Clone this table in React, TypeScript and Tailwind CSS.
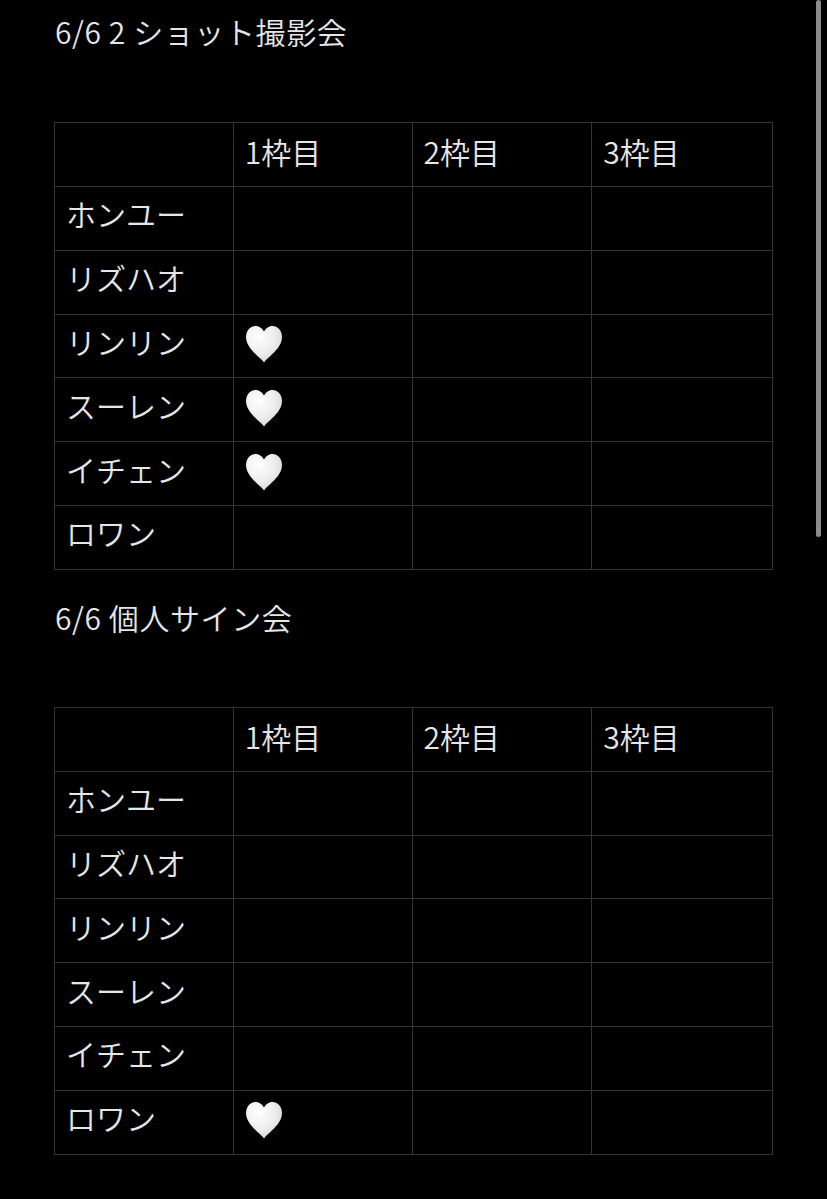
import React from "react";

const names = ["ホンユー", "リズハオ", "リンリン", "スーレン", "イチェン", "ロワン"];
const headers = ["", "1枠目", "2枠目", "3枠目"];

function Heart() {
  return (
    <svg width="38" height="38" viewBox="0 0 38 38" className="block">
      <defs>
        <radialGradient id="hg" cx="0.35" cy="0.3" r="0.8">
          <stop offset="0" stopColor="#ffffff" />
          <stop offset="0.6" stopColor="#ececec" />
          <stop offset="1" stopColor="#cfcfcf" />
        </radialGradient>
      </defs>
      <path
        d="M19 37.5 C15 32 1 23.5 1 12 C1 5.5 5.5 1 10.5 1 C14.5 1 17.5 3.5 19 6.5 C20.5 3.5 23.5 1 27.5 1 C32.5 1 37 5.5 37 12 C37 23.5 23 32 19 37.5 Z"
        fill="url(#hg)"
      />
    </svg>
  );
}

function Table({ hearts }: { hearts: number[] }) {
  const widths = ["w-[179px]", "w-[179px]", "w-[180px]", "w-[181px]"];
  return (
    <div className="w-[719px] border-l border-t border-[#333333]">
      <div className="flex">
        {headers.map((h, i) => (
          <div
            key={i}
            className={`${widths[i]} h-[64px] border-r border-b border-[#333333] flex items-center pl-[11px] pb-[6px]`}
          >
            {h}
          </div>
        ))}
      </div>
      {names.map((n, r) => (
        <div key={n} className="flex">
          <div className={`${widths[0]} h-[63.8px] border-r border-b border-[#333333] flex items-center pl-[11px] pb-[9px]`}>
            {n}
          </div>
          <div className={`${widths[1]} h-[63.8px] border-r border-b border-[#333333] flex items-center pl-[11px] pb-[4px]`}>
            {hearts.includes(r) ? <Heart /> : null}
          </div>
          <div className={`${widths[2]} h-[63.8px] border-r border-b border-[#333333]`} />
          <div className={`${widths[3]} h-[63.8px] border-r border-b border-[#333333]`} />
        </div>
      ))}
    </div>
  );
}

export default function App() {
  return (
    <div
      className="relative w-[827px] h-[1199px] bg-black text-[#e6e6e6] text-[30px] font-[350] overflow-hidden"
      style={{ fontFamily: '"Noto Sans CJK JP", "Noto Sans", sans-serif' }}
    >
      <div className="pl-[54px] flex flex-col">
        <div className="h-[66px] leading-[62px] pl-[1px] tracking-[0.6px]">6/6 2 ショット撮影会</div>
        <div className="mt-[56px]">
          <Table hearts={[2, 3, 4]} />
        </div>
        <div className="mt-[16px] h-[66px] leading-[62px] pl-[1px] tracking-[0.6px]">6/6 個人サイン会</div>
        <div className="mt-[55px]">
          <Table hearts={[5]} />
        </div>
      </div>
      <div className="absolute right-[6px] top-0 w-[5px] h-[537px] rounded-full bg-[#8c8c8c]" />
    </div>
  );
}
